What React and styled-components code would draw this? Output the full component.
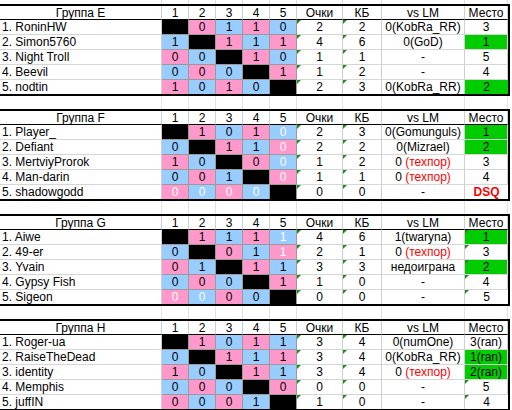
import React from "react";
import styled, { createGlobalStyle, css } from "styled-components";

const COLS = "162px 27px 27px 27px 27px 27px 46px 39px 83px 43px";

const GlobalStyle = createGlobalStyle`
  html, body {
    margin: 0;
    padding: 0;
    background: #ffffff;
  }
  body {
    font-family: "Liberation Sans", Arial, sans-serif;
    font-size: 12px;
    color: #000000;
  }
`;

const Sheet = styled.div`
  width: 512px;
  height: 410px;
  overflow: hidden;
  display: flex;
  flex-direction: column;
`;

const GapRow = styled.div`
  display: grid;
  grid-template-columns: ${COLS};
  height: ${(p) => p.$h}px;
  flex: none;

  span {
    border-right: 1px solid #e3e3e3;
  }
`;

const Table = styled.div`
  display: grid;
  grid-template-columns: ${COLS};
  width: 510px;
  box-sizing: border-box;
  border-top: 2px solid #000;
  border-bottom: 2px solid #000;
  border-right: 2px solid #000;
  flex: none;
`;

const cellBase = css`
  position: relative;
  height: 14px;
  line-height: 14px;
  text-align: center;
  white-space: nowrap;
  overflow: hidden;
  border-right: 1px solid #cfcfcf;
  border-bottom: ${(p) => (p.$last ? "none" : "1px solid #d6d6d6")};
  &:last-child {
    border-right: none;
  }
`;

const HeaderCell = styled.div`
  ${cellBase};
  height: 13px;
  line-height: 14px;
  border-bottom: 1px solid #000;
`;

const NameCell = styled.div`
  ${cellBase};
  text-align: left;
  padding-left: 2px;
`;

const scoreColors = {
  pink: "#ff99cc",
  blue: "#99ccff",
  self: "#000000",
};

const ScoreCell = styled.div`
  ${cellBase};
  background: ${(p) => scoreColors[p.$tone]};
  color: ${(p) => (p.$faded ? "#ffffff" : "#000000")};
  border-right-color: #9a9a9a;
  border-bottom-color: #9a9a9a;
`;

const ValueCell = styled.div`
  ${cellBase};
  background: ${(p) => (p.$win ? "#00cc00" : "transparent")};
  color: ${(p) => (p.$dsq ? "#ff0000" : "#000000")};
  font-weight: ${(p) => (p.$dsq ? 700 : 400)};
`;

const Mark = styled.i`
  position: absolute;
  left: 0;
  top: 0;
  width: 0;
  height: 0;
  border-top: 4px solid #1f8a1f;
  border-right: 4px solid transparent;
`;

const Tech = styled.span`
  color: #ff0000;
`;

// x = self, w = white text, ! = green place, # = техпор
const groups = [
  {
    title: "Группа E",
    placeMarks: [],
    rows: [
      ["1. RoninHW", "x 0 1 1 0", "2", "2", "0(KobRa_RR)", "3"],
      ["2. Simon5760", "1 x 1 1 1", "4", "6", "0(GoD)", "1!"],
      ["3. Night Troll", "0 0 x 1 0", "1", "1", "-", "5"],
      ["4. Beevil", "0 0 0 x 1", "1", "2", "-", "4"],
      ["5. nodtin", "1 0 1 0 x", "2", "3", "0(KobRa_RR)", "2!"],
    ],
  },
  {
    title: "Группа F",
    placeMarks: [],
    rows: [
      ["1. Player_", "x 1 0 1 0w", "2", "3", "0(Gomunguls)", "1!"],
      ["2. Defiant", "0 x 1 1 0w", "2", "2", "0(Mizrael)", "2!"],
      ["3. MertviyProrok", "1 0 x 0 0w", "1", "2", "0 #", "3"],
      ["4. Man-darin", "0 0 1 x 0w", "1", "1", "0 #", "4"],
      ["5. shadowgodd", "0w 0w 0w 0w x", "0", "0", "-", "DSQ"],
    ],
  },
  {
    title: "Группа G",
    placeMarks: [0, 1, 2, 3, 4],
    rows: [
      ["1. Aiwe", "x 1 1 1 1w", "4", "6", "1(twaryna)", "1!"],
      ["2. 49-er", "0 x 0 1 1w", "2", "1", "0 #", "3"],
      ["3. Yvain", "0 1 x 1 1", "3", "3", "недоиграна", "2!"],
      ["4. Gypsy Fish", "0 0 0 x 1", "1", "0", "-", "4"],
      ["5. Sigeon", "0w 0w 0 0 x", "0", "0", "-", "5"],
    ],
  },
  {
    title: "Группа H",
    placeMarks: [3, 4],
    rows: [
      ["1. Roger-ua", "x 1 0 1 1", "3", "4", "0(numOne)", "3(ran)"],
      ["2. RaiseTheDead", "0 x 1 1 1", "3", "4", "0(KobRa_RR)", "1(ran)!"],
      ["3. identity", "1 0 x 1 1", "3", "4", "0 #", "2(ran)!"],
      ["4. Memphis", "0 0 0 x 0", "0", "0", "-", "5"],
      ["5. juffIN", "0 0 0 1 x", "1", "0", "-", "4"],
    ],
  },
];

const Gap = ({ h }) => (
  <GapRow $h={h}>
    {Array.from({ length: 10 }).map((_, i) => (
      <span key={i} />
    ))}
  </GapRow>
);

const LmText = ({ text }) => {
  if (text.endsWith("#")) {
    return (
      <>
        {text.slice(0, -1)}
        <Tech>(техпор)</Tech>
      </>
    );
  }
  return text;
};

const Group = ({ group }) => (
  <Table>
    <HeaderCell>{group.title}</HeaderCell>
    {[1, 2, 3, 4, 5].map((n) => (
      <HeaderCell key={n}>{n}</HeaderCell>
    ))}
    <HeaderCell>Очки</HeaderCell>
    <HeaderCell>КБ</HeaderCell>
    <HeaderCell>vs LM</HeaderCell>
    <HeaderCell>Место</HeaderCell>

    {group.rows.map(([name, res, pts, kb, lm, place], r) => {
      const last = r === group.rows.length - 1;
      let k = 0;
      const win = place.endsWith("!");
      const placeText = win ? place.slice(0, -1) : place;
      return (
        <React.Fragment key={name}>
          <NameCell $last={last}>{name}</NameCell>
          {res.split(" ").map((v, c) => {
            if (v === "x") {
              return <ScoreCell key={c} $tone="self" $last={last} />;
            }
            // non-diagonal cells alternate pink/blue, odd rows start pink
            const startPink = r % 2 === 0;
            const tone = (k % 2 === 0) === startPink ? "pink" : "blue";
            k += 1;
            return (
              <ScoreCell key={c} $tone={tone} $faded={v.endsWith("w")} $last={last}>
                {v[0]}
              </ScoreCell>
            );
          })}
          <ValueCell $last={last}>
            <Mark />
            {pts}
          </ValueCell>
          <ValueCell $last={last}>
            <Mark />
            {kb}
          </ValueCell>
          <ValueCell $last={last}>
            <LmText text={lm} />
          </ValueCell>
          <ValueCell $last={last} $win={win} $dsq={placeText === "DSQ"}>
            {group.placeMarks.includes(r) && <Mark />}
            {placeText}
          </ValueCell>
        </React.Fragment>
      );
    })}
  </Table>
);

const App = () => (
  <>
    <GlobalStyle />
    <Sheet>
      <Gap h={4} />
      {groups.map((g, i) => (
        <React.Fragment key={g.title}>
          <Group group={g} />
          {i < groups.length - 1 && <Gap h={13} />}
        </React.Fragment>
      ))}
    </Sheet>
  </>
);

export default App;
